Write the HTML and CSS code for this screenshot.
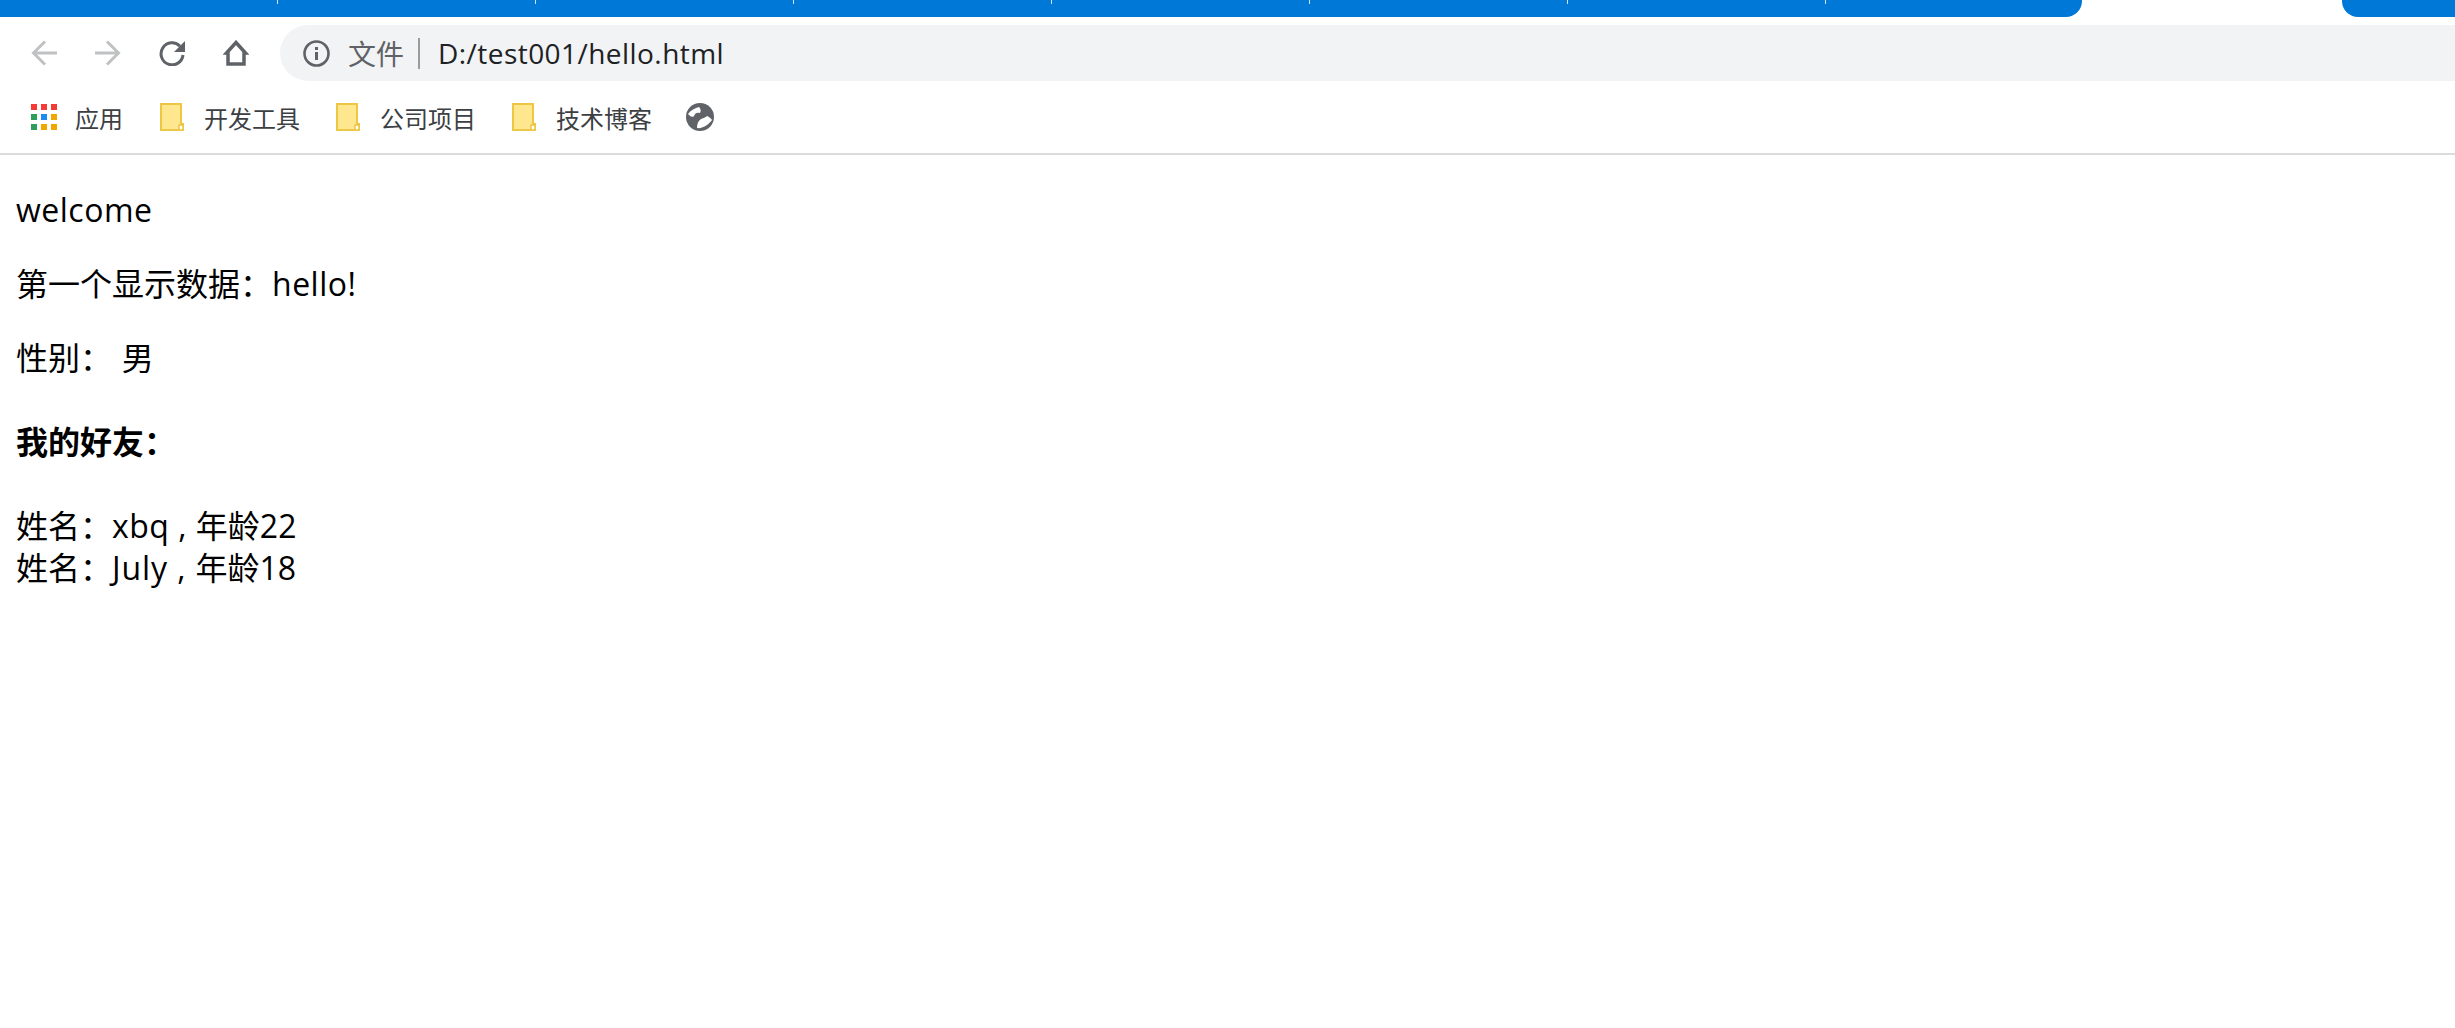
FILE: index.html
```html
<!DOCTYPE html>
<html lang="zh-CN">
  <head>
    <meta charset="UTF-8" />
    <title>hello</title>
    <link rel="stylesheet" href="styles.css">
  </head>
  <body>
    <header class="browser">
      <div class="tab-strip">
        <div class="tabs">
          <div class="tab first"></div>
          <div class="tab"></div>
          <div class="tab"></div>
          <div class="tab"></div>
          <div class="tab"></div>
          <div class="tab"></div>
          <div class="tab"></div>
        </div>
        <div class="active-tab"></div>
        <div class="tabs-rest"></div>
      </div>

      <div class="toolbar">
        <div class="nav-icons">
          <svg class="icon" viewBox="0 0 26 26" fill="none" stroke="#bfc1c3" stroke-width="3">
            <path d="M26 13H3M14 1.500 2.500 13 14 24.500" />
          </svg>
          <svg class="icon" viewBox="0 0 26 26" fill="none" stroke="#bfc1c3" stroke-width="3">
            <path d="M0 13H23M12 1.500 23.500 13 12 24.500" />
          </svg>
          <svg class="icon" viewBox="0 0 26 26">
            <path fill="none" stroke="#5f6368" stroke-width="3" d="M21 6.200A11 11 0 1 0 24 15" />
            <path fill="#5f6368" d="M27 0V12H15Z" />
          </svg>
          <svg class="icon" viewBox="0 0 26 26" fill="none" stroke="#5f6368" stroke-width="3.500">
            <path d="M13 2.500 22.500 13H21V24H5V13H3.500Z" />
          </svg>
        </div>
        <div class="address-bar">
          <svg class="info-icon" viewBox="0 0 27 27">
            <circle cx="13.500" cy="13.500" r="12" fill="none" stroke="#5f6368" stroke-width="2.600" />
            <rect x="12" y="7" width="3" height="3" fill="#5f6368" />
            <rect x="12" y="12" width="3" height="8" fill="#5f6368" />
          </svg>
          <span class="scheme">文件</span>
          <span class="divider"></span>
          <span class="url">D:/test001/hello.html</span>
        </div>
      </div>

      <div class="bookmarks">
        <a class="bookmark apps">
          <svg class="apps-icon" viewBox="0 0 26 26">
            <rect x="0" y="0" width="6" height="6" fill="#f63a36" />
            <rect x="10" y="0" width="6" height="6" fill="#f63a36" />
            <rect x="20" y="0" width="6" height="6" fill="#f63a36" />
            <rect x="0" y="10" width="6" height="6" fill="#2f9e5b" />
            <rect x="10" y="10" width="6" height="6" fill="#1d8cf0" />
            <rect x="20" y="10" width="6" height="6" fill="#f2a600" />
            <rect x="0" y="20" width="6" height="6" fill="#2f9e5b" />
            <rect x="10" y="20" width="6" height="6" fill="#f2a600" />
            <rect x="20" y="20" width="6" height="6" fill="#f2a600" />
          </svg>
          应用
        </a>
        <a class="bookmark">
          <svg class="folder" viewBox="0 0 24 28">
            <path fill="#fee78f" stroke="#edc644" stroke-width="2" d="M1 1H21V21H23V27H1Z" />
            <path fill="#fff" stroke="#edc644" stroke-width="1.500" d="M19 27V22H23V27Z" />
          </svg>
          开发工具
        </a>
        <a class="bookmark">
          <svg class="folder" viewBox="0 0 24 28">
            <path fill="#fee78f" stroke="#edc644" stroke-width="2" d="M1 1H21V21H23V27H1Z" />
            <path fill="#fff" stroke="#edc644" stroke-width="1.500" d="M19 27V22H23V27Z" />
          </svg>
          公司项目
        </a>
        <a class="bookmark">
          <svg class="folder" viewBox="0 0 24 28">
            <path fill="#fee78f" stroke="#edc644" stroke-width="2" d="M1 1H21V21H23V27H1Z" />
            <path fill="#fff" stroke="#edc644" stroke-width="1.500" d="M19 27V22H23V27Z" />
          </svg>
          技术博客
        </a>
        <a class="bookmark">
          <svg class="globe" viewBox="0 0 28 28">
            <circle cx="14" cy="14" r="14" fill="#5f6368" />
            <path fill="#fff" d="M2 11C5 7 9 5 13 4 15 6 15 8 14 10 11 9 9 10 8 13 6 15 4 13 2 11Z" />
            <path fill="#fff" d="M11 25C11 21 12 18 15 16 18 15 20 14 21 13 23 14 25 15 26 17 23 21 17 26 11 25Z" />
          </svg>
        </a>
      </div>
    </header>

    <main class="page">
      <p><span class="en">welcome</span></p>
      <p>第一个显示数据：<span class="en">hello!</span></p>
      <p class="gender">性别： 男</p>
      <h4>我的好友：</h4>
      <div>姓名：<span class="en">xbq , </span>年龄22</div>
      <div>姓名：<span class="en wide">July , </span>年龄18</div>
    </main>
  </body>
</html>
```

FILE: styles.css
```css
body {
  margin: 0;
  background: #fff;
  color: #000;
  font-family: "Open Sans", "Noto Sans CJK SC", sans-serif;
}
.browser {
  border-bottom: 2px solid #dadbdc;
  height: 153px;
}

/* tab strip */
.tab-strip {
  display: flex;
  height: 17px;
}
.tabs {
  display: flex;
  width: 2082px;
  background: #0078d7;
  border-bottom-right-radius: 16px;
}
.tab {
  display: flex;
  justify-content: flex-end;
  width: 258px;
}
.tab.first {
  width: 278px;
}
.tab::after {
  content: "";
  width: 1px;
  height: 4px;
  background: #cfe4f7;
}
.active-tab {
  width: 260px;
}
.tabs-rest {
  flex: 1;
  background: #0078d7;
  border-bottom-left-radius: 16px;
}

/* toolbar */
.toolbar {
  display: flex;
  align-items: center;
  height: 56px;
  padding: 8px 0 0 31px;
}
.nav-icons {
  display: flex;
  gap: 38px;
  width: 249px;
}
.icon {
  width: 26px;
  height: 26px;
}
.address-bar {
  display: flex;
  align-items: center;
  flex: 1;
  height: 56px;
  padding-left: 23px;
  background: #f1f3f4;
  border-radius: 28px 0 0 28px;
}
.info-icon {
  width: 27px;
  height: 27px;
  margin-right: 18px;
}
.scheme {
  font-size: 28px;
  color: #5f6368;
}
.divider {
  width: 2px;
  height: 31px;
  margin: 0 18px 0 14px;
  background: #9a9b9d;
}
.url {
  font-size: 28px;
  letter-spacing: 0.45px;
  color: #202124;
}

/* bookmarks */
.bookmarks {
  display: flex;
  align-items: center;
  height: 56px;
  padding: 0 0 0 31px;
  margin-top: 8px;
}
.bookmark {
  display: flex;
  align-items: center;
  font-size: 24px;
  color: #3c4043;
  margin-right: 36px;
}
.bookmark.apps {
  margin-right: 37px;
}
.apps-icon {
  width: 26px;
  height: 26px;
  margin-right: 18px;
}
.folder {
  width: 24px;
  height: 28px;
  margin-right: 20px;
}
.globe {
  width: 28px;
  height: 28px;
  margin-left: -2px;
}

/* page content */
.page {
  padding: 2px 16px;
  font-size: 32px;
  line-height: 42px;
}
.page p {
  margin: 32px 0;
}
.page p.gender {
  word-spacing: 1.5px;
}
.page h4 {
  margin: 42px 0;
  font-size: 32px;
  line-height: 42px;
}
.en {
  letter-spacing: 0.5px;
}
.en.wide {
  letter-spacing: 0.9px;
}
```
